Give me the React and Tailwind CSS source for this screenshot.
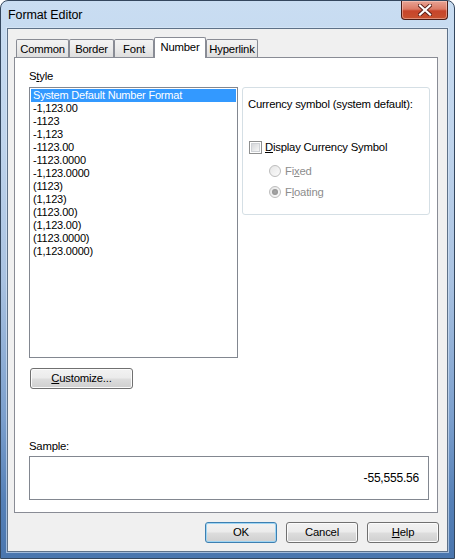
import React from 'react';

const styles = [
    'System Default Number Format',
    '-1,123.00',
    '-1123',
    '-1,123',
    '-1123.00',
    '-1123.0000',
    '-1,123.0000',
    '(1123)',
    '(1,123)',
    '(1123.00)',
    '(1,123.00)',
    '(1123.0000)',
    '(1,123.0000)',
];

const tabs = [
    { label: 'Common', w: 'w-[53px]' },
    { label: 'Border', w: 'w-[45px]' },
    { label: 'Font', w: 'w-[40px]' },
    { label: 'Number', w: 'w-[52px]', active: true },
    { label: 'Hyperlink', w: 'w-[52px]' },
];

const Button = ({ children, className = '', isDefault }) => (
    <div
        className={`h-[21px] rounded-[3px] border flex items-center justify-center text-black bg-[linear-gradient(180deg,#f2f2f2_0%,#ebebeb_48%,#dddddd_52%,#cfcfcf_100%)] ${
            isDefault ? 'border-[#3c7fb1] shadow-[inset_0_0_0_1px_#9fd5f3]' : 'border-[#707070] shadow-[inset_0_0_0_1px_#fbfbfb]'
        } ${className}`}
    >
        {children}
    </div>
);

const App = () => {
    return (
        <div
            className="w-[455px] h-[559px] flex flex-col rounded-t-[8px] border border-[#34475e] bg-[linear-gradient(180deg,#c9ddf2_0%,#bfd4ec_25%,#a9c2e1_50%,#7b9fcd_75%,#5580b7_90%,#4a76ae_100%)] text-[11.3px] tracking-[-0.2px] text-black"
            style={{ fontFamily: '"Liberation Sans", Arial, sans-serif' }}
        >
            {/* title bar */}
            <div className="h-[27px] flex justify-between">
                <div className="pl-[7px] pt-[7px] text-[12.5px] leading-[15px] tracking-[-0.1px] text-black">Format Editor</div>
                <div className="mr-[6px] w-[47px] h-[19px] rounded-b-[4px] border border-t-0 border-[#4a1c16] bg-[linear-gradient(180deg,#e8a394_0%,#dc7b66_45%,#c7452b_55%,#c7512f_100%)] shadow-[inset_0_0_0_1px_rgba(255,220,210,0.45)] flex items-center justify-center">
                    <svg width="14" height="12" viewBox="0 0 14 12">
                        <path d="M2 1.5 L12 10.5 M12 1.5 L2 10.5" stroke="#5a1f18" strokeWidth="4" strokeLinecap="square" />
                        <path d="M2 1.5 L12 10.5 M12 1.5 L2 10.5" stroke="#ffffff" strokeWidth="2.2" strokeLinecap="square" />
                    </svg>
                </div>
            </div>

            {/* client area */}
            <div className="mx-[6px] h-[524px] border border-[#5e7188] bg-[#f0f0f0] shadow-[0_0_0_1px_rgba(220,234,248,0.6)] flex flex-col">
                {/* tab strip */}
                <div className="h-[20px] mt-[8px] pl-[8px] flex items-end">
                    {tabs.map((t) =>
                        t.active ? (
                            <div
                                key={t.label}
                                className={`${t.w} h-[21px] -mb-[1px] relative z-10 border border-b-0 border-[#898c95] rounded-t-[2px] bg-white flex items-center justify-center pb-[2px]`}
                            >
                                {t.label}
                            </div>
                        ) : (
                            <div
                                key={t.label}
                                className={`${t.w} h-[18px] border border-b-0 border-[#898c95] rounded-t-[2px] bg-[linear-gradient(180deg,#f3f3f3_0%,#ebebeb_50%,#dedede_100%)] flex items-center justify-center pt-[2px]`}
                            >
                                {t.label}
                            </div>
                        )
                    )}
                </div>

                {/* tab panel */}
                <div className="ml-[6px] w-[424px] h-[456px] border border-[#898c95] bg-white flex flex-col pl-[14px] pt-[11px]">
                    <div className="flex items-start">
                        <div className="flex flex-col">
                            <div className="h-[14px] leading-[14px]">
                                S<span className="underline">t</span>yle
                            </div>
                            <div className="mt-[4px] w-[209px] h-[271px] border border-[#828790] bg-white p-[1px] flex flex-col text-[11px]">
                                {styles.map((s, i) => (
                                    <div
                                        key={s}
                                        className={`h-[13px] leading-[13px] pl-[2px] ${i === 0 ? 'bg-[#3399ff] text-white' : 'text-black'}`}
                                    >
                                        {s}
                                    </div>
                                ))}
                            </div>
                        </div>

                        <div className="ml-[4px] mt-[18px] w-[188px] h-[128px] rounded-[3px] border border-[#d5dfe5] flex flex-col pl-[5px]">
                            <div className="mt-[9px] leading-[14px]">Currency symbol (system default):</div>
                            <div className="mt-[29px] flex items-center">
                                <div className="ml-[1px] w-[13px] h-[13px] border border-[#8e8f8f] bg-white p-[1px]">
                                    <div className="w-full h-full border border-[#cfd2d6] bg-[linear-gradient(135deg,#d6d8db_0%,#f7f7f7_100%)]" />
                                </div>
                                <div className="ml-[3px] leading-[14px]">
                                    <span className="underline">D</span>isplay Currency Symbol
                                </div>
                            </div>
                            <div className="mt-[10px] ml-[21px] flex items-center">
                                <div className="w-[12px] h-[12px] rounded-full border border-[#bcbcbc] bg-[linear-gradient(135deg,#e6e6e6_0%,#fbfbfb_100%)]" />
                                <div className="ml-[4px] leading-[14px] text-[#8d8d8d]">
                                    Fi<span className="underline">x</span>ed
                                </div>
                            </div>
                            <div className="mt-[7px] ml-[21px] flex items-center">
                                <div className="w-[12px] h-[12px] rounded-full border border-[#bcbcbc] bg-[linear-gradient(135deg,#e6e6e6_0%,#fbfbfb_100%)] flex items-center justify-center">
                                    <div className="w-[6px] h-[6px] rounded-full bg-[radial-gradient(circle,#a9a9a9_0%,#8a8a8a_100%)]" />
                                </div>
                                <div className="ml-[4px] leading-[14px] text-[#8d8d8d]">
                                    F<span className="underline">l</span>oating
                                </div>
                            </div>
                        </div>
                    </div>

                    <Button className="mt-[10px] ml-[1px] w-[103px]">
                        <span>
                            <span className="underline">C</span>ustomize...
                        </span>
                    </Button>

                    <div className="mt-[51px] h-[13px] leading-[13px]">Sample:</div>
                    <div className="mt-[3px] w-[400px] h-[44px] border border-[#828790] bg-white flex items-center justify-end pr-[9px] text-[12px]">
                        -55,555.56
                    </div>
                </div>

                {/* dialog buttons */}
                <div className="mt-[9px] mr-[8px] flex justify-end gap-[9px]">
                    <Button isDefault className="w-[72px]">OK</Button>
                    <Button className="w-[72px]">Cancel</Button>
                    <Button className="w-[72px]">
                        <span>
                            <span className="underline">H</span>elp
                        </span>
                    </Button>
                </div>
            </div>
        </div>
    );
};

export default App;
